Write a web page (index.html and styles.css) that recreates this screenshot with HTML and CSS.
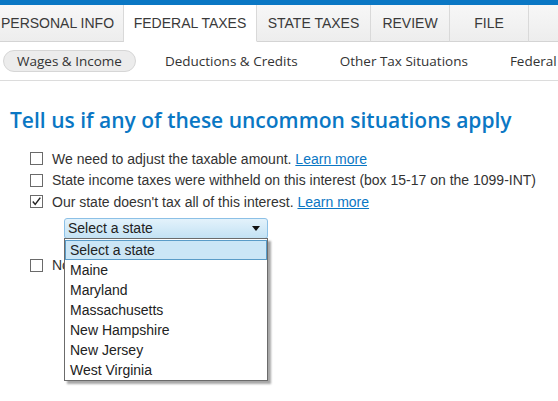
FILE: index.html
```html
<!DOCTYPE html>
<html>
<head>
<meta charset="utf-8">
<link rel="stylesheet" href="styles.css">
</head>
<body>
<div class="topbar"></div>
<nav class="tabs">
  <div class="tab t1">PERSONAL INFO</div>
  <div class="tab t2 active">FEDERAL TAXES</div>
  <div class="tab t3">STATE TAXES</div>
  <div class="tab t4">REVIEW</div>
  <div class="tab t5">FILE</div>
  <div class="tab filler"></div>
</nav>
<nav class="subnav">
  <div class="sub pill">Wages &amp; Income</div>
  <div class="sub">Deductions &amp; Credits</div>
  <div class="sub">Other Tax Situations</div>
  <div class="sub">Federal Review</div>
</nav>
<main class="main">
  <h1 class="title">Tell us if any of these uncommon situations apply</h1>
  <div class="options">
    <div class="row"><span class="cb"></span><span>We need to adjust the taxable amount. <a class="link">Learn more</a></span></div>
    <div class="row"><span class="cb"></span><span>State income taxes were withheld on this interest (box 15-17 on the 1099-INT)</span></div>
    <div class="row"><span class="cb checked"><svg width="11" height="11" viewBox="0 0 11 11"><path d="M1.8 5.6 L4.2 8.4 L9.3 1.6" fill="none" stroke="#222" stroke-width="1.5"/></svg></span><span>Our state doesn't tax all of this interest. <a class="link">Learn more</a></span></div>
    <div class="select-wrap">
      <div class="select"><span>Select a state</span><svg class="caret" width="8" height="5" viewBox="0 0 8 5"><path d="M0 0 H8 L4 5 Z" fill="#111"/></svg></div>
      <ul class="dropdown">
        <li class="hl">Select a state</li>
        <li>Maine</li>
        <li>Maryland</li>
        <li>Massachusetts</li>
        <li>New Hampshire</li>
        <li>New Jersey</li>
        <li>West Virginia</li>
      </ul>
    </div>
    <div class="row"><span class="cb"></span><span>None of these apply</span></div>
  </div>
</main>
</body>
</html>
```
FILE: styles.css
```css
html, body { margin: 0; padding: 0; background: #fff; }
body { font-family: "Liberation Sans", Arial, sans-serif; color: #333; width: 558px; height: 401px; overflow: hidden; }
.topbar { height: 5px; background: #0a77c4; }
.tabs { display: flex; height: 37px; margin-left: -10px; }
.tab { box-sizing: border-box; flex: none; height: 37px; display: flex; align-items: center; justify-content: center; font-size: 14px; color: #3a3a3a; background: linear-gradient(#f7f7f7, #ededed); border-right: 1px solid #d9d9d9; border-bottom: 1px solid #d4d4d4; white-space: nowrap; }
.t1 { width: 134px; justify-content: flex-start; padding-left: 11px; }
.t2 { width: 133px; }
.t3 { width: 114px; }
.t4 { width: 79px; }
.t5 { width: 79px; }
.tab.active { background: #fff; border-bottom-color: #fff; }
.tab.filler { flex: 1; border-right: none; }
.subnav { display: flex; align-items: center; height: 38px; border-bottom: 1px solid #dcdcdc; padding-left: 3px; gap: 16px; white-space: nowrap; }
.sub { font-family: "Open Sans", sans-serif; font-size: 13.5px; color: #333; padding: 0 13px; height: 22px; line-height: 22px; box-sizing: border-box; flex: none; }
.pill { background: #ececec; border: 1px solid #d6d6d6; border-radius: 12px; line-height: 20px; }
.main { padding-left: 10px; }
.title { margin: 25px 0 0; font-family: "Open Sans", sans-serif; font-weight: 600; font-size: 21px; line-height: 28px; color: #0a77c4; white-space: nowrap; }
.options { margin-top: 14px; padding-left: 20px; font-size: 14px; }
.row { display: flex; align-items: center; height: 21.5px; gap: 9px; white-space: nowrap; }
.cb { box-sizing: border-box; width: 13px; height: 13px; border: 1px solid #6a6a6a; background: #fff; display: inline-flex; align-items: center; justify-content: center; flex: none; }
.link { color: #0a77c4; text-decoration: underline; }
.select-wrap { position: relative; margin: 5px 0 0 34px; height: 37px; }
.select { box-sizing: border-box; width: 204px; height: 21px; border: 1px solid #8cc0e6; border-radius: 3px; background: linear-gradient(#e3f2fb, #c3e2f4); display: flex; align-items: center; justify-content: space-between; padding: 0 7px 0 3px; font-size: 14px; color: #222; }
.dropdown { position: absolute; left: 0; top: 20px; width: 204px; box-sizing: border-box; margin: 0; padding: 1px 0 0; list-style: none; background: #fff; border: 1px solid #6b6b6b; box-shadow: 3px 3px 2px rgba(0,0,0,0.35); z-index: 2; font-size: 14px; color: #222; }
.dropdown li { height: 20px; line-height: 20px; padding-left: 5px; }
.dropdown li.hl { background: #cbe6f6; outline: 1px solid #5a9cc8; outline-offset: -1px; }
```
